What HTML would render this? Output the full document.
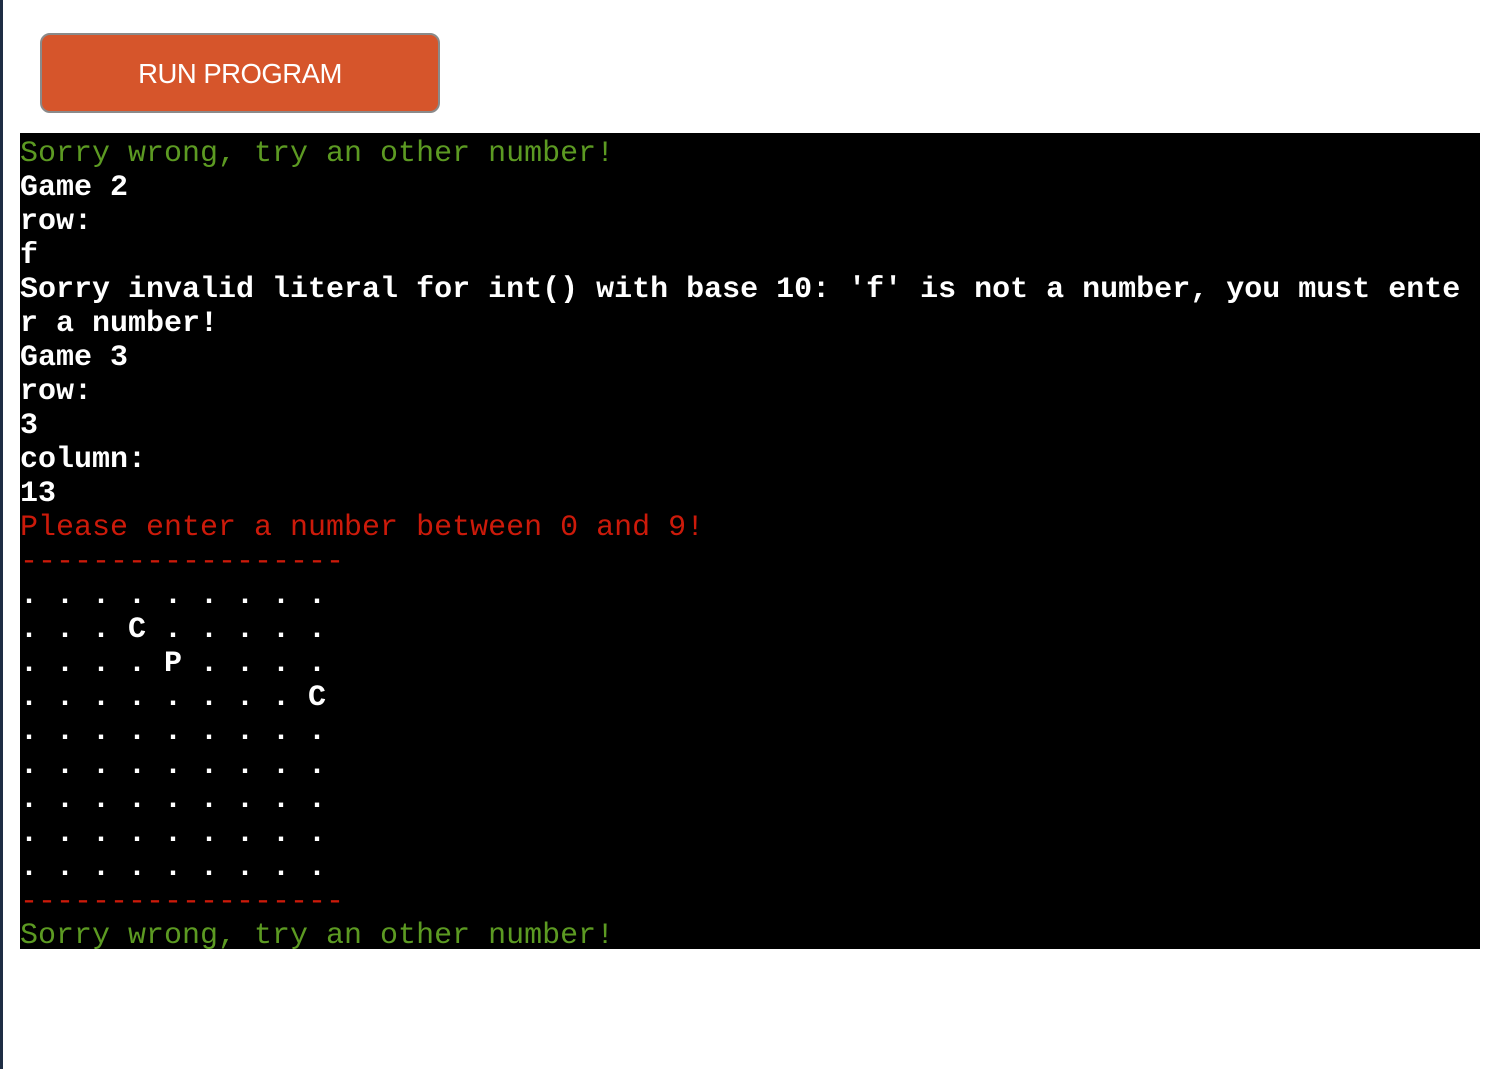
<!DOCTYPE html>
<html><head><style>
body{margin:0;width:1502px;height:1069px;background:#fff;position:relative;overflow:hidden}
.lb{position:absolute;left:0;top:0;width:3px;height:1069px;background:#1e2d44}
.btn{position:absolute;left:40px;top:33px;width:396px;height:76px;background:#d6552b;border:2px solid #8a8a8a;border-radius:10px;color:#fff;font:27.5px "Liberation Sans",sans-serif;text-align:center;line-height:78px;letter-spacing:-0.5px}
.term{position:absolute;left:20px;top:133px;width:1460px;height:816px;background:#000;overflow:hidden}
.in{padding-top:4px;font:30px/34px "Liberation Mono",monospace;color:#fff;white-space:pre;font-weight:bold}
.g{color:#5c9a22;font-weight:normal}
.r{color:#cc1a0a;font-weight:normal}
</style></head><body>
<div class="lb"></div>
<div class="btn">RUN PROGRAM</div>
<div class="term"><div class="in"><span class="g">Sorry wrong, try an other number!</span>
Game 2
row:
f
Sorry invalid literal for int() with base 10: 'f' is not a number, you must ente
r a number!
Game 3
row:
3
column:
13
<span class="r">Please enter a number between 0 and 9!</span>
<span class="r">------------------</span>
. . . . . . . . .
. . . C . . . . .
. . . . P . . . .
. . . . . . . . C
. . . . . . . . .
. . . . . . . . .
. . . . . . . . .
. . . . . . . . .
. . . . . . . . .
<span class="r">------------------</span>
<span class="g">Sorry wrong, try an other number!</span></div></div>
</body></html>
